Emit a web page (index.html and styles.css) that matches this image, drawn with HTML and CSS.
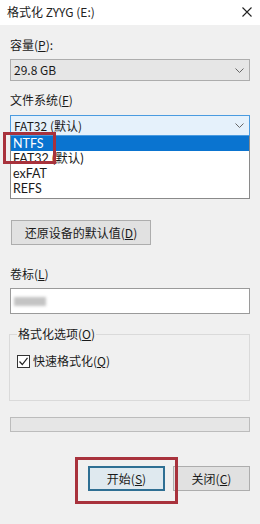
FILE: index.html
```html
<!DOCTYPE html>
<html lang="zh-CN">
<head>
<meta charset="utf-8">
<title>格式化 ZYYG (E:)</title>
<link rel="stylesheet" href="styles.css">
</head>
<body>
<div class="window">
  <div class="titlebar">
    <span class="title">格式化 ZYYG (E:)</span>
    <svg class="close-x" width="10" height="10" viewBox="0 0 10 10"><path d="M0.5 0.5 L9.5 9.5 M9.5 0.5 L0.5 9.5" stroke="#222" stroke-width="1.1" fill="none"/></svg>
  </div>
  <div class="content">
    <div class="label first">容量(<u>P</u>):</div>
    <div class="combo">
      <span>29.8 GB</span>
      <svg class="chev" width="9" height="5" viewBox="0 0 9 5"><path d="M0.5 0.5 L4.5 4.5 L8.5 0.5" stroke="#666" stroke-width="1" fill="none"/></svg>
    </div>
    <div class="label l2">文件系统(<u>F</u>)</div>
    <div class="combo focus">
      <span>FAT32 (默认)</span>
      <svg class="chev" width="9" height="5" viewBox="0 0 9 5"><path d="M0.5 0.5 L4.5 4.5 L8.5 0.5" stroke="#666" stroke-width="1" fill="none"/></svg>
    </div>
    <div class="list">
      <div class="row selected">NTFS</div>
      <div class="row">FAT32 (默认)</div>
      <div class="row">exFAT</div>
      <div class="row">REFS</div>
    </div>
    <div class="btn restore">还原设备的默认值(<u>D</u>)</div>
    <div class="label l3">卷标(<u>L</u>)</div>
    <div class="input"><span class="blur"></span></div>
    <fieldset class="group">
      <legend>格式化选项(<u>O</u>)</legend>
      <div class="check-row">
        <span class="checkbox"><svg width="11" height="11" viewBox="0 0 11 11"><path d="M1.5 5.5 L4.3 8.5 L9.5 1.8" stroke="#222" stroke-width="1.2" fill="none"/></svg></span>
        <span>快速格式化(<u>Q</u>)</span>
      </div>
    </fieldset>
    <div class="progress"></div>
    <div class="actions">
      <div class="btn start">开始(<u>S</u>)</div>
      <div class="btn">关闭(<u>C</u>)</div>
    </div>
  </div>
</div>
</body>
</html>
```

FILE: styles.css
```css
* { box-sizing: border-box; }
html, body { margin: 0; padding: 0; }
body {
  font-family: "Noto Sans CJK SC", "Noto Sans", sans-serif;
  font-size: 12px;
  color: #1a1a1a;
  background: #f0f0f0;
}
u { text-decoration: underline; text-underline-offset: 1px; }
.window {
  width: 260px;
  height: 524px;
  background: #f0f0f0;
  overflow: hidden;
}
.titlebar {
  height: 25px;
  background: #ffffff;
  display: flex;
  align-items: center;
  justify-content: space-between;
  padding: 0 8px 1px 7px;
}
.title { line-height: 16px; color: #222; }
.close-x { display: block; }
.content {
  padding: 12px 10px 0 10px;
}
.label { line-height: 16px; height: 16px; }
.label.first { margin-bottom: 6px; }
.label.l2 { margin-top: 11px; margin-bottom: 7px; }
.label.l3 { margin-top: 21px; margin-bottom: 6px; }
.combo {
  height: 22px;
  border: 1px solid #adadad;
  background: #e6e6e6;
  display: flex;
  align-items: center;
  justify-content: space-between;
  padding: 0 5px 0 3px;
  line-height: 16px;
}
.combo.focus {
  height: 21px;
  border-color: #4a9be0;
  background: #e5f1fb;
}
.chev { display: block; }
.list {
  background: #ffffff;
  border: 1px solid #8a8a8a;
  border-top: none;
  padding-bottom: 2px;
}
.row {
  height: 15px;
  line-height: 15px;
  padding-left: 2px;
  font-family: "Lato", "Noto Sans CJK SC", sans-serif;
  font-size: 12.5px;
}
.row.selected {
  background: #0a74d0;
  color: #ffffff;
  position: relative;
}
.row.selected::after {
  content: "";
  position: absolute;
  left: -8px;
  top: -4px;
  width: 47px;
  height: 26px;
  border: 3px solid #a8323c;
}
.btn {
  height: 25px;
  width: 77px;
  border: 1px solid #adadad;
  background: #e1e1e1;
  display: flex;
  align-items: center;
  justify-content: center;
  line-height: 16px;
}
.btn.restore {
  margin-top: 21px;
  margin-left: 1px;
  width: 140px;
}
.input {
  height: 26px;
  border: 1px solid #9a9a9a;
  background: #ffffff;
  display: flex;
  align-items: center;
  padding-left: 3px;
}
.blur {
  display: block;
  width: 32px;
  height: 9px;
  background: #c4c4c4;
  filter: blur(1.5px);
}
.group {
  margin: 12px 0 0 -1px;
  border: 1px solid #dadada;
  padding: 11px 7px 31px 7px;
  min-width: 0;
}
.group legend {
  padding: 0 1px;
  line-height: 16px;
}
.check-row {
  display: flex;
  align-items: center;
  gap: 3px;
  line-height: 16px;
}
.checkbox {
  width: 13px;
  height: 13px;
  border: 1px solid #333;
  background: #fff;
  display: flex;
  align-items: center;
  justify-content: center;
}
.checkbox svg { display: block; }
.progress {
  margin-top: 16px;
  height: 15px;
  border: 1px solid #bcbcbc;
  background: #e6e6e6;
}
.actions {
  margin-top: 34px;
  display: flex;
  justify-content: flex-end;
  gap: 8px;
}
.btn.start {
  border: 2px solid #2f6f93;
  background: #dfe9ef;
  position: relative;
}
.btn.start::after {
  content: "";
  position: absolute;
  left: -15px;
  top: -11px;
  width: 97px;
  height: 41px;
  border: 3px solid #a8323c;
}
```
